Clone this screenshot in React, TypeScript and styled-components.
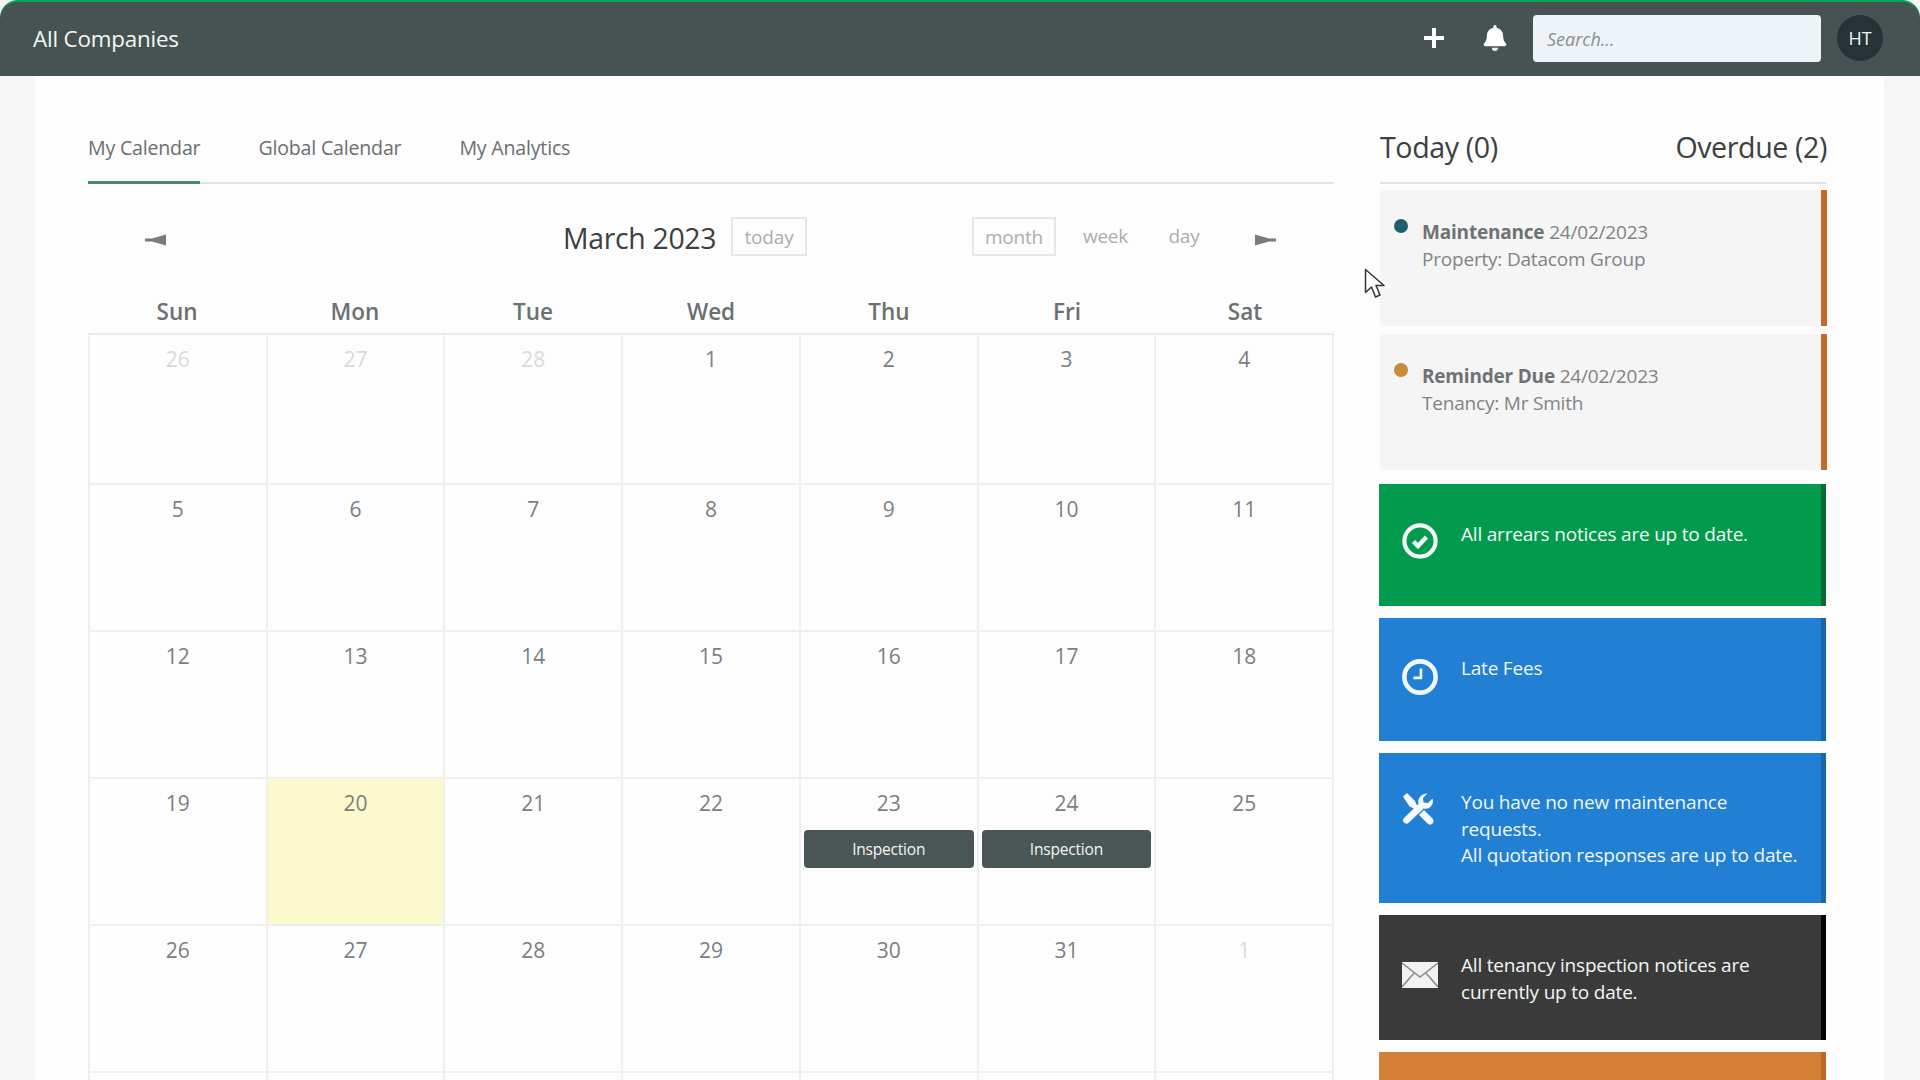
import React from 'react';
import styled, { createGlobalStyle } from 'styled-components';
import { FaBell } from 'react-icons/fa';

const Global = createGlobalStyle`
  html, body { margin: 0; padding: 0; height: 100%; background: #f6f6f6; }
  body { font-family: "Open Sans", "Liberation Sans", sans-serif; overflow: hidden; }
  * { box-sizing: border-box; }
`;

const Shell = styled.div`
  position: relative;
  width: 1920px;
  height: 1080px;
  overflow: hidden;
  background: #f6f6f6;
`;
const Header = styled.header`
  height: 76px;
  display: flex;
  align-items: center;
  padding: 0 37px 0 33px;
  background: #475353;
  border-top: 2px solid #08a452;
  border-radius: 18px 18px 0 0;
`;
const Brand = styled.div`
  flex: 1;
  color: #f4f6f6;
  font-size: 22.4px;
  letter-spacing: -0.2px;
  margin-top: -2px;
`;
const IconButton = styled.button`
  width: 30px;
  height: 30px;
  padding: 0;
  margin-right: 31px;
  display: flex;
  align-items: center;
  justify-content: center;
  background: none;
  border: 0;
  color: #fff;
  margin-top: -2px;
`;
const Search = styled.input`
  width: 288px;
  height: 47px;
  margin-right: 16px;
  margin-left: -8px;
  margin-top: -2px;
  padding: 2px 14px 0;
  border: 0;
  border-radius: 4px;
  background: #eef3f7;
  font: italic 18px "Open Sans", sans-serif;
  &::placeholder { color: #8a8f92; opacity: 1; }
`;
const Avatar = styled.div`
  width: 46px;
  height: 46px;
  margin-top: -2px;
  border-radius: 50%;
  background: #263236;
  color: #f4f6f6;
  font-size: 18px;
  display: flex;
  align-items: center;
  justify-content: center;
`;
const Sheet = styled.main`
  margin: 0 36px 0 35px;
  height: 1004px;
  padding: 52px 56px 0 53px;
  background: #fdfdfd;
  display: flex;
  gap: 46px;
`;
const Main = styled.section`
  width: 1246px;
  flex: none;
`;
const Tabs = styled.nav`
  height: 56px;
  display: flex;
  gap: 58px;
  border-bottom: 2px solid #e3e5e5;
`;
const Tab = styled.div<{ $active?: boolean }>`
  height: 56px;
  line-height: 39px;
  font-size: 19.6px;
  letter-spacing: -0.2px;
  color: #6a6f70;
  border-bottom: 3px solid ${p => (p.$active ? '#47896a' : 'transparent')};
`;
const Toolbar = styled.div`
  height: 39px;
  margin-top: 33px;
  padding-right: 58px;
  display: flex;
  align-items: center;
`;
const Arrow = styled.svg<{ $left: number }>`
  width: 22px;
  height: 12px;
  flex: none;
  margin-top: 6px;
  margin-left: ${p => p.$left}px;
`;
const Title = styled.h2`
  margin: 2px 0 0 396px;
  width: 153px;
  font-weight: 400;
  font-size: 28.4px;
  letter-spacing: -0.3px;
  white-space: nowrap;
  color: #3b4040;
`;
const ViewButton = styled.div<{ $boxed?: boolean; $width: number }>`
  width: ${p => p.$width}px;
  height: 39px;
  border: 2px solid ${p => (p.$boxed ? '#e7e7e7' : 'transparent')};
  display: flex;
  align-items: center;
  justify-content: center;
  font-size: 19px;
  letter-spacing: -0.2px;
  color: #aaaeae;
  padding-bottom: ${p => (p.$boxed ? 0 : 2)}px;
`;
const TodayButton = styled(ViewButton)`
  margin-left: 15px;
`;
const Views = styled.div`
  margin-left: auto;
  display: flex;
  align-items: center;
`;
const DayHead = styled.div`
  display: grid;
  grid-template-columns: repeat(7, 1fr);
  margin-top: 35px;
  height: 44px;
  border-bottom: 2px solid #ececec;
`;
const DayName = styled.div`
  text-align: center;
  font-size: 22.5px;
  font-weight: 600;
  color: #6b7071;
  line-height: 42px;
`;
const Grid = styled.div`
  display: grid;
  grid-template-columns: repeat(7, 1fr);
  grid-template-rows: 150px repeat(5, 147px);
  border-left: 2px solid #efefef;
`;
const Cell = styled.div<{ $today?: boolean }>`
  position: relative;
  border-right: 2px solid #efefef;
  border-bottom: 2px solid #efefef;
  background: ${p => (p.$today ? '#fdf9ce' : 'transparent')};
  padding: 10px 3px 0;
  text-align: center;
`;
const DayNum = styled.div<{ $muted?: boolean }>`
  font-size: 21px;
  line-height: 29px;
  color: ${p => (p.$muted ? '#dadada' : '#7b7f80')};
`;
const Event = styled.div`
  height: 38px;
  margin-top: 12px;
  border-radius: 4px;
  background: #4a5555;
  color: #f4f6f6;
  font-size: 15.5px;
  letter-spacing: -0.2px;
  line-height: 38px;
`;
const Side = styled.aside`
  width: 447px;
  flex: none;
  display: flex;
  flex-direction: column;
`;
const SideHead = styled.div`
  height: 56px;
  flex: none;
  display: flex;
  justify-content: space-between;
  border-bottom: 2px solid #e3e5e5;
  font-size: 28.6px;
  line-height: 38px;
  letter-spacing: -0.4px;
  color: #3b4040;
  margin-bottom: 6px;
`;
const Task = styled.div`
  height: 136px;
  flex: none;
  margin-bottom: 8px;
  padding: 27px 0 0 14px;
  display: flex;
  gap: 14px;
  background: #f5f5f5;
  border-right: 6px solid #c8692c;
  border-radius: 4px 0 0 4px;
`;
const Dot = styled.span<{ $color: string }>`
  width: 14px;
  height: 14px;
  margin-top: 2px;
  flex: none;
  border-radius: 50%;
  background: ${p => p.$color};
`;
const TaskText = styled.div`
  margin-top: 2px;
  font-size: 19px;
  line-height: 26.5px;
  letter-spacing: -0.2px;
  color: #7f8384;
  white-space: nowrap;
`;
const TaskName = styled.b`
  font-weight: 700;
  color: #6e7273;
`;
const Alerts = styled.div`
  display: flex;
  flex-direction: column;
  flex: none;
  gap: 12px;
  margin: 6px 1px 0 -1px;
`;
const Alert = styled.div<{ $bg: string; $strip: string; $h: number; $pad?: number }>`
  height: ${p => p.$h}px;
  flex: none;
  padding: ${p => p.$pad ?? 37}px 0 0 23px;
  display: flex;
  gap: 23px;
  background: ${p => p.$bg};
  border-right: 5px solid ${p => p.$strip};
  color: #f2f6f6;
  font-size: 19px;
  line-height: 26.5px;
  letter-spacing: -0.2px;
  white-space: nowrap;
`;
const AlertIcon = styled.div<{ $top: number; $shift?: number }>`
  width: 36px;
  height: 36px;
  margin-top: ${p => p.$top}px;
  margin-left: ${p => -(p.$shift ?? 0)}px;
  margin-right: ${p => p.$shift ?? 0}px;
  flex: none;
  display: flex;
  align-items: center;
  justify-content: center;
`;
const Cursor = styled.svg`
  position: absolute;
  left: 1364px;
  top: 268px;
  width: 21px;
  height: 31px;
`;

const weeks: [number?, boolean?][][] = [
  [[26, true], [27, true], [28, true], [1], [2], [3], [4]],
  [[5], [6], [7], [8], [9], [10], [11]],
  [[12], [13], [14], [15], [16], [17], [18]],
  [[19], [20], [21], [22], [23], [24], [25]],
  [[26], [27], [28], [29], [30], [31], [1, true]],
  [[], [], [], [], [], [], []],
];

export default function App() {
  return (
    <Shell>
      <Global />
      <Header>
        <Brand>All Companies</Brand>
        <IconButton aria-label="Add">
          <svg width="24" height="24" viewBox="0 0 24 24">
            <path d="M12 2v20M2 12h20" stroke="#fff" strokeWidth="4" fill="none" />
          </svg>
        </IconButton>
        <IconButton aria-label="Notifications">
          <FaBell size={26} />
        </IconButton>
        <Search placeholder="Search..." />
        <Avatar>HT</Avatar>
      </Header>
      <Sheet>
        <Main>
          <Tabs>
            <Tab $active>My Calendar</Tab>
            <Tab>Global Calendar</Tab>
            <Tab>My Analytics</Tab>
          </Tabs>
          <Toolbar>
            <Arrow $left={57} viewBox="0 0 22 12">
              <path d="M0 4.500h7L21 .5v11L7 7.500H0z" fill="#777c7d" />
            </Arrow>
            <Title>March 2023</Title>
            <TodayButton $boxed $width={76}>today</TodayButton>
            <Views>
              <ViewButton $boxed $width={84}>month</ViewButton>
              <ViewButton $width={99}>week</ViewButton>
              <ViewButton $width={58}>day</ViewButton>
              <Arrow $left={41} viewBox="0 0 22 12">
                <path d="M22 4.500h-7L1 .5v11l14-4h7z" fill="#777c7d" />
              </Arrow>
            </Views>
          </Toolbar>
          <DayHead>
            {['Sun', 'Mon', 'Tue', 'Wed', 'Thu', 'Fri', 'Sat'].map(d => (
              <DayName key={d}>{d}</DayName>
            ))}
          </DayHead>
          <Grid>
            {weeks.map((w, i) =>
              w.map(([n, muted], j) => (
                <Cell key={`${i}-${j}`} $today={i === 3 && j === 1}>
                  {n !== undefined && <DayNum $muted={muted}>{n}</DayNum>}
                  {i === 3 && (j === 4 || j === 5) && <Event>Inspection</Event>}
                </Cell>
              ))
            )}
          </Grid>
        </Main>
        <Side>
          <SideHead>
            <span>Today (0)</span>
            <span>Overdue (2)</span>
          </SideHead>
          <Task>
            <Dot $color="#1f5f6b" />
            <TaskText>
              <TaskName>Maintenance</TaskName> 24/02/2023
              <br />
              Property: Datacom Group
            </TaskText>
          </Task>
          <Task>
            <Dot $color="#c98a3c" />
            <TaskText>
              <TaskName>Reminder Due</TaskName> 24/02/2023
              <br />
              Tenancy: Mr Smith
            </TaskText>
          </Task>
          <Alerts>
            <Alert $bg="#029b4e" $strip="#066b37" $h={122}>
              <AlertIcon $top={2}>
                <svg width="36" height="36" viewBox="0 0 36 36" fill="none" stroke="#f4f8f6">
                  <circle cx="18" cy="18" r="15.600" strokeWidth="4.200" />
                  <path d="M11.500 18.500l4.500 4.500 8.500-9" strokeWidth="4.500" />
                </svg>
              </AlertIcon>
              <div>All arrears notices are up to date.</div>
            </Alert>
            <Alert $bg="#2180d4" $strip="#1a66a9" $h={123}>
              <AlertIcon $top={4}>
                <svg width="38" height="38" viewBox="0 0 38 38" fill="none" stroke="#f4f8fb">
                  <circle cx="19" cy="19" r="16.500" strokeWidth="4.800" />
                  <path d="M20 10v10h-8" strokeWidth="2.800" />
                </svg>
              </AlertIcon>
              <div>Late Fees</div>
            </Alert>
            <Alert $bg="#2180d4" $strip="#1a66a9" $h={150} $pad={36}>
              <AlertIcon $top={3} $shift={2}>
                <svg width="38" height="38" viewBox="0 0 36 36" fill="#f4f8fb">
                  <path d="M3 4.500 7 1l8 8 1.500 3.500L22 18l-3.500 3.500-5.500-5.500-3.500-1.500z" />
                  <path d="M24 18l8.500 8.500c1.500 1.500 1.500 3.500 0 5s-3.500 1.500-5 0L19 23z" />
                  <path d="M27.500 1.500 23 6l.5 4.500 4.500.5 4.500-4.500c1 3 .3 6-1.700 8-2 2-4.500 2.600-7.200 1.900L9 30.500c-1.600 1.600-3.700 1.500-5 .1-1.300-1.300-1.300-3.300.2-4.800L18.500 12c-.8-2.700-.1-5.500 1.800-7.500 1.900-2 4.700-3.300 7.200-3z" />
                </svg>
              </AlertIcon>
              <div>
                You have no new maintenance
                <br />
                requests.
                <br />
                All quotation responses are up to date.
              </div>
            </Alert>
            <Alert $bg="#3a3a3a" $strip="#040404" $h={125}>
              <AlertIcon $top={5}>
                <svg width="36" height="26" viewBox="0 0 36 26">
                  <rect width="36" height="26" fill="#f2f2f2" />
                  <path d="M0 1l18 14L36 1M0 25l12-14M36 25 24 11" fill="none" stroke="#8d8d8d" strokeWidth="1.500" />
                </svg>
              </AlertIcon>
              <div>
                All tenancy inspection notices are
                <br />
                currently up to date.
              </div>
            </Alert>
            <Alert $bg="#d47f36" $strip="#b9692b" $h={60} />
          </Alerts>
        </Side>
      </Sheet>
      <Cursor viewBox="0 0 21 31">
        <path d="M1.500 1.500v23l6-5.500 4 10 4.500-2-4-9.500h8z" fill="#fff" stroke="#333" strokeWidth="1.500" strokeLinejoin="round" />
      </Cursor>
    </Shell>
  );
}
